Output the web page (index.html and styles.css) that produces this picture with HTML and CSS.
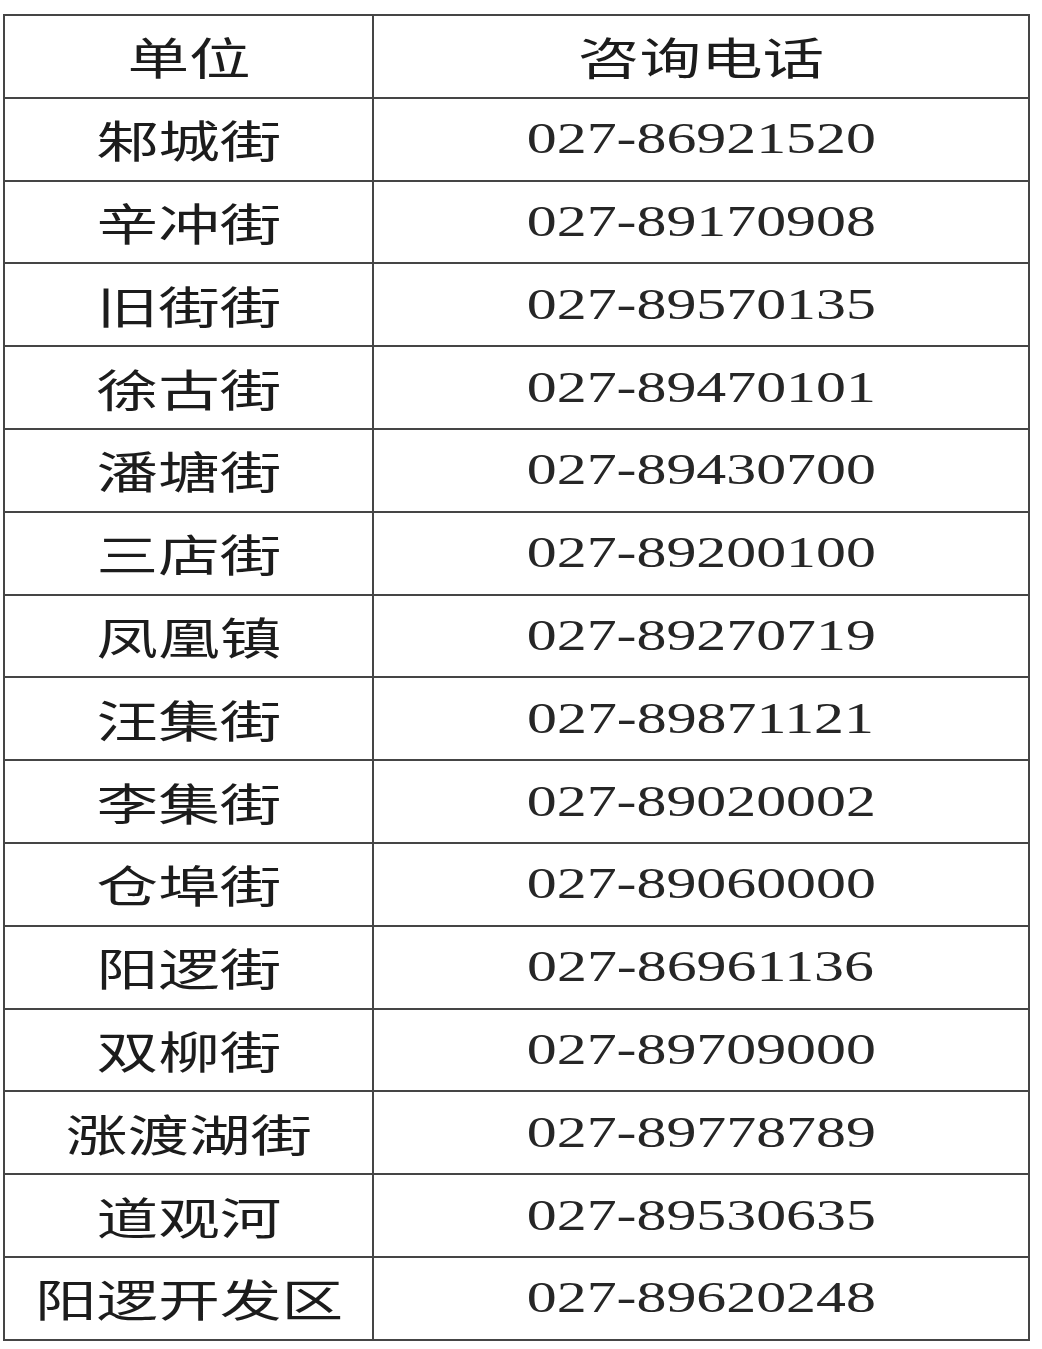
FILE: index.html
```html
<!DOCTYPE html>
<html lang="zh-CN">
<head>
<meta charset="utf-8">
<title>咨询电话</title>
<link rel="stylesheet" href="styles.css">
</head>
<body>
<table class="phone-table">
  <thead>
    <tr><th class="unit"><span class="cn">单位</span></th><th class="tel"><span class="cn">咨询电话</span></th></tr>
  </thead>
  <tbody>
    <tr><td class="unit"><span class="cn">邾城街</span></td><td class="tel"><span class="num">027-86921520</span></td></tr>
    <tr><td class="unit"><span class="cn">辛冲街</span></td><td class="tel"><span class="num">027-89170908</span></td></tr>
    <tr><td class="unit"><span class="cn">旧街街</span></td><td class="tel"><span class="num">027-89570135</span></td></tr>
    <tr><td class="unit"><span class="cn">徐古街</span></td><td class="tel"><span class="num">027-89470101</span></td></tr>
    <tr><td class="unit"><span class="cn">潘塘街</span></td><td class="tel"><span class="num">027-89430700</span></td></tr>
    <tr><td class="unit"><span class="cn">三店街</span></td><td class="tel"><span class="num">027-89200100</span></td></tr>
    <tr><td class="unit"><span class="cn">凤凰镇</span></td><td class="tel"><span class="num">027-89270719</span></td></tr>
    <tr><td class="unit"><span class="cn">汪集街</span></td><td class="tel"><span class="num">027-89871121</span></td></tr>
    <tr><td class="unit"><span class="cn">李集街</span></td><td class="tel"><span class="num">027-89020002</span></td></tr>
    <tr><td class="unit"><span class="cn">仓埠街</span></td><td class="tel"><span class="num">027-89060000</span></td></tr>
    <tr><td class="unit"><span class="cn">阳逻街</span></td><td class="tel"><span class="num">027-86961136</span></td></tr>
    <tr><td class="unit"><span class="cn">双柳街</span></td><td class="tel"><span class="num">027-89709000</span></td></tr>
    <tr><td class="unit"><span class="cn">涨渡湖街</span></td><td class="tel"><span class="num">027-89778789</span></td></tr>
    <tr><td class="unit"><span class="cn">道观河</span></td><td class="tel"><span class="num">027-89530635</span></td></tr>
    <tr><td class="unit"><span class="cn">阳逻开发区</span></td><td class="tel"><span class="num">027-89620248</span></td></tr>
  </tbody>
</table>
</body>
</html>
```
FILE: styles.css
```css
html, body {
  margin: 0;
  padding: 0;
  background: #ffffff;
}

body {
  padding: 14px 0 0 3px;
}

.phone-table {
  border-collapse: collapse;
  width: 1027px;
  table-layout: fixed;
  color: #1c1c1c;
}

.phone-table tr {
  height: 82.8px;
}

.phone-table th,
.phone-table td {
  border: 2px solid #454545;
  padding: 0;
  text-align: center;
  vertical-align: middle;
  font-weight: normal;
  line-height: 0;
  font-size: 0;
}

.phone-table .unit {
  width: 367px;
}

.cn,
.num {
  display: inline-block;
  vertical-align: middle;
  transform-origin: center center;
  white-space: nowrap;
}

.cn {
  font-family: "Noto Sans CJK SC", "Noto Sans", sans-serif;
  font-size: 44px;
  line-height: 44px;
  transform: scaleX(1.4);
}

.num {
  font-family: "Liberation Serif", "Times New Roman", serif;
  font-size: 44px;
  line-height: 44px;
  color: #262626;
  transform: scaleX(1.36);
}
```
